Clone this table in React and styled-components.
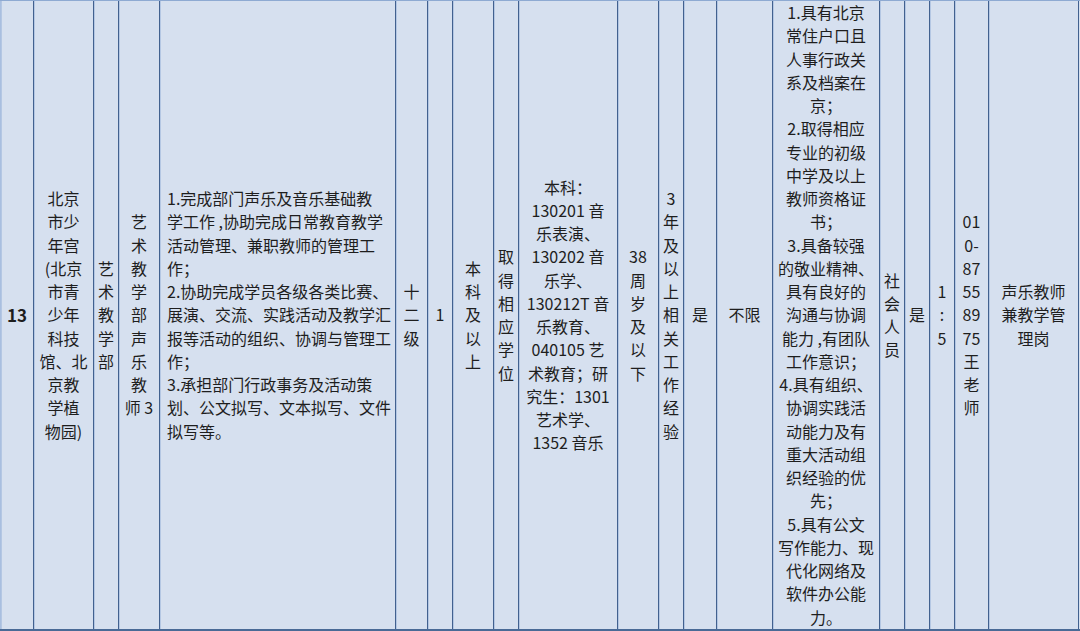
import React from 'react';
import styled, { createGlobalStyle } from 'styled-components';

const GlobalStyle = createGlobalStyle`
    html, body {
        margin: 0;
        padding: 0;
        background: #d6e0ef;
    }
`;

// column widths measured from the grid lines of the sheet
const widths = [34, 60, 25, 41, 236, 32, 25, 41, 25, 99, 41, 25, 33, 56, 107, 25, 25, 25, 34, 90];

const Table = styled.div`
    display: grid;
    grid-template-columns: ${widths.map((w) => `${w}px`).join(' ')};
    width: 1080px;
    height: 631px;
    box-sizing: border-box;
    background-color: #d6e0ef;
    border-top: 1px solid #8eaad2;
    border-bottom: 2px solid #4a6a96;
    font-family: "Noto Sans CJK SC", "Noto Sans", sans-serif;
    color: #1e1e1e;
    overflow: hidden;
`;

const Cell = styled.div`
    display: flex;
    flex-direction: column;
    justify-content: center;
    align-items: ${(p) => (p.$align === 'left' ? 'flex-start' : 'center')};
    padding-left: ${(p) => (p.$align === 'left' ? '7px' : '0')};
    border-right: 1px solid #42618f;
    box-shadow: inset 1px 0 0 #b4c7e3;
    min-width: 0;
    font-size: ${(p) => (p.$bold ? '17px' : '16px')};
    line-height: 23.25px;
    font-weight: ${(p) => (p.$bold ? 700 : 400)};

    &:first-child {
        border-left: 1px solid #a9bfe0;
    }
`;

const Line = styled.span`
    display: block;
    white-space: nowrap;
    text-align: ${(p) => (p.$align === 'left' ? 'left' : 'center')};
`;

const row = [
    { lines: ['13'], bold: true },
    { lines: ['北京', '市少', '年宫', '(北京', '市青', '少年', '科技', '馆、北', '京教', '学植', '物园)'] },
    { lines: ['艺', '术', '教', '学', '部'] },
    { lines: ['艺', '术', '教', '学', '部', '声', '乐', '教', '师 3'] },
    {
        align: 'left',
        lines: [
            '1.完成部门声乐及音乐基础教',
            '学工作 ,协助完成日常教育教学',
            '活动管理、兼职教师的管理工',
            '作；',
            '2.协助完成学员各级各类比赛、',
            '展演、交流、实践活动及教学汇',
            '报等活动的组织、协调与管理工',
            '作；',
            '3.承担部门行政事务及活动策',
            '划、公文拟写、文本拟写、文件',
            '拟写等。',
        ],
    },
    { lines: ['十', '二', '级'] },
    { lines: ['1'] },
    { lines: ['本', '科', '及', '以', '上'] },
    { lines: ['取', '得', '相', '应', '学', '位'] },
    {
        lines: [
            '本科：',
            '130201 音',
            '乐表演、',
            '130202 音',
            '乐学、',
            '130212T 音',
            '乐教育、',
            '040105 艺',
            '术教育；研',
            '究生：1301',
            '艺术学、',
            '1352 音乐',
        ],
    },
    { lines: ['38', '周', '岁', '及', '以', '下'] },
    { lines: ['3', '年', '及', '以', '上', '相', '关', '工', '作', '经', '验'] },
    { lines: ['是'] },
    { lines: ['不限'] },
    {
        lines: [
            '1.具有北京',
            '常住户口且',
            '人事行政关',
            '系及档案在',
            '京；',
            '2.取得相应',
            '专业的初级',
            '中学及以上',
            '教师资格证',
            '书；',
            '3.具备较强',
            '的敬业精神、',
            '具有良好的',
            '沟通与协调',
            '能力 ,有团队',
            '工作意识；',
            '4.具有组织、',
            '协调实践活',
            '动能力及有',
            '重大活动组',
            '织经验的优',
            '先；',
            '5.具有公文',
            '写作能力、现',
            '代化网络及',
            '软件办公能',
            '力。',
        ],
    },
    { lines: ['社', '会', '人', '员'] },
    { lines: ['是'] },
    { lines: ['1', ':', '5'] },
    { lines: ['01', '0-', '87', '55', '89', '75', '王', '老', '师'] },
    { lines: ['声乐教师', '兼教学管', '理岗'] },
];

function App() {
    return (
        <>
            <GlobalStyle />
            <Table>
                {row.map((cell, i) => (
                    <Cell key={i} $align={cell.align} $bold={cell.bold}>
                        {cell.lines.map((text, j) => (
                            <Line key={j} $align={cell.align}>{text}</Line>
                        ))}
                    </Cell>
                ))}
            </Table>
        </>
    );
}

export default App;
